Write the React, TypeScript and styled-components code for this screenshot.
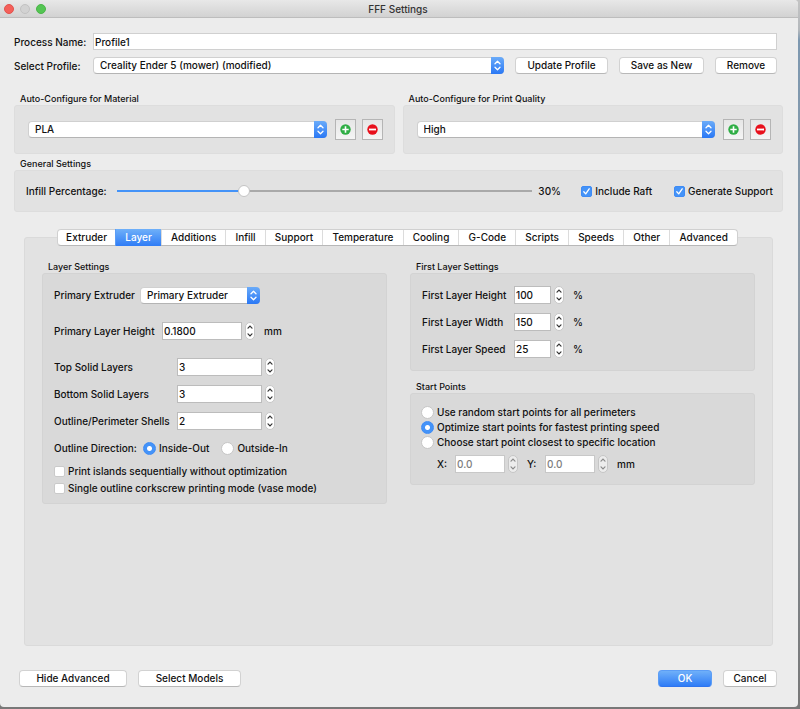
import React, { useId, useState } from "react";
import styled, { createGlobalStyle, css } from "styled-components";

const GlobalStyle = createGlobalStyle`
  *, *::before, *::after { box-sizing: border-box; }
  html, body { margin: 0; }
  body {
    background: linear-gradient(180deg, #c4c4c4 0, #b4b8bc 30px, #7d98b0 40px, #8d9aa6 300px, #787878 100%);
    color: #111;
    font-family: Inter, "Liberation Sans", sans-serif;
    font-size: 10px;
    font-weight: 500;
    line-height: 16px;
  }
  button, input, select { font: inherit; color: inherit; margin: 0; }
`;

const Backdrop = styled.div`
  display: flex;
  min-height: 100vh;
  padding: 0 2px 2px 0;
`;

const Window = styled.main`
  flex: 1;
  min-width: 0;
  display: flex;
  flex-direction: column;
  background: #ececec;
  border-radius: 0 4px 4px 4px;
  overflow: hidden;
`;

const TitleBar = styled.header`
  display: grid;
  grid-template-columns: 1fr auto 1fr;
  align-items: center;
  height: 18px;
  padding: 0 6px 0 4px;
  background: linear-gradient(#e8e8e8, #d2d2d2);
  border-bottom: 1px solid #bdbdbd;
`;

const Lights = styled.div`
  display: flex;
  gap: 6px;
`;

const Light = styled.button<{ $color: string; $edge: string }>`
  width: 10px;
  height: 10px;
  padding: 0;
  border: 1px solid ${(p) => p.$edge};
  border-radius: 50%;
  background: ${(p) => p.$color};
`;

const WindowTitle = styled.h1`
  margin: 0;
  font-size: 10px;
  font-weight: 500;
  color: #333;
`;

const Content = styled.div`
  flex: 1;
  display: flex;
  flex-direction: column;
  padding: 15px 15px 0 14px;
`;

const ProfileForm = styled.div`
  display: grid;
  grid-template-columns: 72px 1fr;
  align-items: center;
  gap: 7px;
  padding-right: 6px;
  white-space: nowrap;
`;

const ProfileRow = styled.div`
  display: flex;
  gap: 11px;
`;

const TextInput = styled.input`
  width: 100%;
  min-width: 0;
  height: 17px;
  padding: 0 1px;
  border: 1px solid #d0d0d0;
  border-radius: 0;
  background: #fff;
  outline: none;
`;

const PushButton = styled.button<{ $width: number; $primary?: boolean }>`
  flex: none;
  width: ${(p) => p.$width}px;
  height: 17px;
  padding: 0;
  border: 1px solid #d2d2d2;
  border-bottom-color: #b8b8b8;
  border-radius: 4px;
  background: #fff;
  line-height: 15px;
  ${(p) =>
    p.$primary &&
    css`
      border-color: #5b9df6;
      border-bottom-color: #2f74ee;
      background: linear-gradient(#6fb0f9, #2f7cf6);
      color: #fff;
    `}
`;

const SelectFrame = styled.span<{ $width?: number }>`
  display: flex;
  ${(p) => (p.$width ? `flex: none; width: ${p.$width}px;` : "flex: 1; min-width: 0;")}
  height: 17px;
  border: 1px solid #d0d0d0;
  border-bottom-color: #b4b4b4;
  border-radius: 4px;
  background: #fff;
`;

const NativeSelect = styled.select`
  flex: 1;
  min-width: 0;
  margin-right: -13px;
  padding: 0 16px 0 6px;
  border: 0;
  appearance: none;
  background: transparent;
  outline: none;
  line-height: 15px;
`;

const SelectCap = styled.svg`
  flex: none;
  width: 13px;
  height: 17px;
  margin: -1px -1px -1px 0;
  border-radius: 0 4px 4px 0;
  background: linear-gradient(#6aabf9, #2a78f5);
  pointer-events: none;
`;

const GroupSection = styled.section`
  min-width: 0;
`;

const GroupTitle = styled.h2`
  margin: 0;
  padding-left: 6px;
  font-size: 9px;
  font-weight: 500;
  line-height: 12px;
`;

const GroupBox = styled.div<{ $deep?: boolean; $pad: string }>`
  display: flex;
  flex-direction: column;
  padding: ${(p) => p.$pad};
  border: 1px solid ${(p) => (p.$deep ? "#d3d3d3" : "#dddddd")};
  border-radius: 3px;
  background: ${(p) => (p.$deep ? "#d9d9d9" : "#e2e2e2")};
`;

const AutoGrid = styled.div`
  display: grid;
  grid-template-columns: 1fr 1fr;
  gap: 8px;
  margin-top: 19px;
`;

const AutoRow = styled.div`
  display: flex;
  align-items: center;
  gap: 6px;
`;

const AutoSelect = styled.div`
  flex: 1;
  min-width: 0;
  display: flex;
  margin-right: 2px;
`;

const ToolButton = styled.button`
  flex: none;
  display: grid;
  place-items: center;
  width: 21px;
  height: 21px;
  padding: 0;
  border: 1px solid #b5b5b5;
  background: linear-gradient(#e6e6e6, #f5f5f5);
`;

const GeneralGroup = styled.div`
  margin-top: 4px;
`;

const GeneralRow = styled.div`
  display: flex;
  align-items: center;
`;

const SliderLabel = styled.label`
  flex: none;
  width: 91px;
`;

const Slider = styled.input<{ $percent: number }>`
  flex: 1;
  min-width: 0;
  height: 14px;
  appearance: none;
  background: linear-gradient(
      90deg,
      #4493f8 ${(p) => p.$percent}%,
      #a9a9a9 ${(p) => p.$percent}%
    )
    center / 100% 2px no-repeat;
  outline: none;
  &::-webkit-slider-thumb {
    appearance: none;
    width: 12px;
    height: 12px;
    border: 1px solid #c4c4c4;
    border-radius: 50%;
    background: #fff;
  }
`;

const SliderValue = styled.output`
  flex: none;
  width: 43px;
  margin-left: 6px;
`;

const ChoiceLabel = styled.label`
  display: flex;
  align-items: center;
  gap: 3px;
  white-space: nowrap;
`;

const GeneralChoices = styled.div`
  display: flex;
  gap: 22px;
`;

const CheckInput = styled.input`
  flex: none;
  appearance: none;
  width: 11px;
  height: 11px;
  border: 1px solid #cacaca;
  border-radius: 2px;
  background: #fff;
  &:checked {
    border-color: #3e8bf5;
    background: #4493f8
      url("data:image/svg+xml,%3Csvg xmlns='http://www.w3.org/2000/svg' viewBox='0 0 9 9'%3E%3Cpath d='M1.8 4.8 3.7 6.9 7.2 1.8' fill='none' stroke='white' stroke-width='1.3' stroke-linecap='round' stroke-linejoin='round'/%3E%3C/svg%3E")
      center / 9px 9px no-repeat;
  }
`;

const RadioInput = styled.input`
  flex: none;
  appearance: none;
  width: 13px;
  height: 13px;
  border: 1px solid #c6c6c6;
  border-radius: 50%;
  background: #fff;
  &:checked {
    border-color: #3e8bf5;
    background: radial-gradient(circle, #fff 2px, #4493f8 3px);
  }
`;

const TabArea = styled.div`
  flex: 1;
  display: flex;
  flex-direction: column;
  margin-top: 17px;
  padding: 0 10px;
`;

const TabList = styled.div`
  z-index: 1;
  display: flex;
  height: 17px;
  margin: 0 35px -9px 33px;
  border: 1px solid #d0d0d0;
  border-bottom-color: #b8b8b8;
  border-radius: 4px;
  background: #fff;
`;

const Tab = styled.button<{ $active: boolean }>`
  flex: 1 1 auto;
  padding: 0 8px;
  border: 0;
  border-left: 1px solid #dcdcdc;
  background: transparent;
  line-height: 15px;
  white-space: nowrap;
  &:first-child {
    border-left: 0;
    padding: 0 7px;
  }
  ${(p) =>
    p.$active &&
    css`
      margin: -1px 0;
      border-left-color: #5b9df6;
      background: linear-gradient(#6fb0f9, #2f7cf6);
      color: #fff;
    `}
`;

const TabPanel = styled.div`
  flex: 1;
  display: grid;
  grid-template-columns: 1fr 1fr;
  align-items: start;
  gap: 23px;
  padding: 23px 17px;
  border: 1px solid #dadada;
  border-radius: 3px;
  background: #e2e2e2;
`;

const PanelColumn = styled.div`
  display: flex;
  flex-direction: column;
  gap: 10px;
  min-width: 0;
`;

const Rows = styled.div<{ $gap: number }>`
  display: flex;
  flex-direction: column;
  gap: ${(p) => p.$gap}px;
`;

const Row = styled.div<{ $indent?: number }>`
  display: flex;
  align-items: center;
  height: 18px;
  padding-left: ${(p) => p.$indent ?? 0}px;
`;

const FieldLabel = styled.label<{ $width: number }>`
  flex: none;
  width: ${(p) => p.$width}px;
  white-space: nowrap;
`;

const DirectionLabel = styled.span`
  flex: none;
  width: 89px;
  white-space: nowrap;
`;

const ChoiceGroup = styled.div`
  display: flex;
  gap: 12px;
`;

const ChoiceList = styled.div<{ $line: number }>`
  display: flex;
  flex-direction: column;
  line-height: ${(p) => p.$line}px;
`;

const NumberInput = styled.input<{ $width: number }>`
  width: ${(p) => p.$width}px;
  height: 18px;
  padding: 0 1px;
  border: 1px solid #bcbcbc;
  border-radius: 0;
  background: #fff;
  outline: none;
  &:disabled {
    border-color: #c8c8c8;
    color: #7d7d7d;
  }
`;

const StepperFrame = styled.span<{ $disabled?: boolean }>`
  flex: none;
  display: flex;
  flex-direction: column;
  width: 10px;
  height: 18px;
  margin-left: 3px;
  border: 1px solid #c6c6c6;
  border-radius: 5px;
  background: ${(p) => (p.$disabled ? "#ececec" : "#fff")};
  color: ${(p) => (p.$disabled ? "#8a8a8a" : "#333")};
`;

const StepButton = styled.button`
  flex: 1;
  display: grid;
  place-items: center;
  min-height: 0;
  padding: 0;
  border: 0;
  background: transparent;
`;

const Unit = styled.span`
  margin-left: 9px;
`;

const Coordinate = styled.div`
  display: flex;
  align-items: center;
  margin-right: 9px;
`;

const Footer = styled.footer`
  display: flex;
  gap: 11px;
  padding: 24px 6px 20px 5px;
`;

const Spacer = styled.div`
  flex: 1;
`;

function Select({ id, label, options, width }: { id?: string; label?: string; options: string[]; width?: number }) {
  return (
    <SelectFrame $width={width}>
      <NativeSelect id={id} aria-label={label}>
        {options.map((o) => (
          <option key={o}>{o}</option>
        ))}
      </NativeSelect>
      <SelectCap viewBox="0 0 13 17" aria-hidden="true">
        <path
          d="M4 6.8 6.5 4.2 9 6.8M4 10.2 6.5 12.8 9 10.2"
          fill="none"
          stroke="#fff"
          strokeWidth="1.3"
          strokeLinecap="round"
          strokeLinejoin="round"
        />
      </SelectCap>
    </SelectFrame>
  );
}

function Group({ title, pad, deep, children }: { title: string; pad: string; deep?: boolean; children: React.ReactNode }) {
  const id = useId();
  return (
    <GroupSection aria-labelledby={id}>
      <GroupTitle id={id}>{title}</GroupTitle>
      <GroupBox $pad={pad} $deep={deep}>
        {children}
      </GroupBox>
    </GroupSection>
  );
}

function AddRemove() {
  return (
    <>
      <ToolButton type="button" aria-label="Add">
        <svg width="11" height="11" viewBox="0 0 11 11" aria-hidden="true">
          <circle cx="5.5" cy="5.5" r="5.2" fill="#2fae45" />
          <path d="M5.5 2.3v6.4M2.3 5.5h6.4" stroke="#fff" strokeWidth="1.6" />
        </svg>
      </ToolButton>
      <ToolButton type="button" aria-label="Delete">
        <svg width="11" height="11" viewBox="0 0 11 11" aria-hidden="true">
          <circle cx="5.5" cy="5.5" r="5.2" fill="#e8101c" />
          <path d="M2 5.5h7" stroke="#fff" strokeWidth="1.8" />
        </svg>
      </ToolButton>
    </>
  );
}

function AutoConfigure({ title, value }: { title: string; value: string }) {
  return (
    <Group title={title} pad="13px 11px 13px 13px">
      <AutoRow>
        <AutoSelect>
          <Select label={title} options={[value]} />
        </AutoSelect>
        <AddRemove />
      </AutoRow>
    </Group>
  );
}

type SpinProps = {
  label: string;
  labelWidth: number;
  width: number;
  initial: string;
  step?: number;
  disabled?: boolean;
};

function Spin({ label, labelWidth, width, initial, step = 1, disabled }: SpinProps) {
  const id = useId();
  const [value, setValue] = useState(initial);
  const digits = (initial.split(".")[1] ?? "").length;
  const bump = (by: number) => setValue((v) => (Number(v) + by).toFixed(digits));
  return (
    <>
      <FieldLabel htmlFor={id} $width={labelWidth}>
        {label}
      </FieldLabel>
      <NumberInput id={id} $width={width} value={value} disabled={disabled} onChange={(e) => setValue(e.target.value)} />
      <StepperFrame $disabled={disabled}>
        <StepButton type="button" aria-label={`Increase ${label}`} disabled={disabled} onClick={() => bump(step)}>
          <svg width="6" height="4" viewBox="0 0 6 4" aria-hidden="true">
            <path d="M1 3.2 3 1.2 5 3.2" fill="none" stroke="currentColor" strokeWidth="1.2" strokeLinecap="round" />
          </svg>
        </StepButton>
        <StepButton type="button" aria-label={`Decrease ${label}`} disabled={disabled} onClick={() => bump(-step)}>
          <svg width="6" height="4" viewBox="0 0 6 4" aria-hidden="true">
            <path d="M1 .8 3 2.8 5 .8" fill="none" stroke="currentColor" strokeWidth="1.2" strokeLinecap="round" />
          </svg>
        </StepButton>
      </StepperFrame>
    </>
  );
}

function Check({ label, checked }: { label: string; checked?: boolean }) {
  return (
    <ChoiceLabel>
      <CheckInput type="checkbox" defaultChecked={checked} />
      {label}
    </ChoiceLabel>
  );
}

function Radio({ name, label, checked }: { name: string; label: string; checked?: boolean }) {
  return (
    <ChoiceLabel>
      <RadioInput type="radio" name={name} defaultChecked={checked} />
      {label}
    </ChoiceLabel>
  );
}

const TABS = [
  "Extruder",
  "Layer",
  "Additions",
  "Infill",
  "Support",
  "Temperature",
  "Cooling",
  "G-Code",
  "Scripts",
  "Speeds",
  "Other",
  "Advanced",
];

function LayerSettings() {
  return (
    <Group title="Layer Settings" deep pad="12px 11px 6px 11px">
      <Rows $gap={18}>
        <Row>
          <FieldLabel htmlFor="primary-extruder" $width={86}>
            Primary Extruder
          </FieldLabel>
          <Select id="primary-extruder" options={["Primary Extruder"]} width={120} />
        </Row>
        <Row>
          <Spin label="Primary Layer Height" labelWidth={108} width={80} initial="0.1800" step={0.01} />
          <Unit>mm</Unit>
        </Row>
        <Rows $gap={9}>
          <Row>
            <Spin label="Top Solid Layers" labelWidth={123} width={85} initial="3" />
          </Row>
          <Row>
            <Spin label="Bottom Solid Layers" labelWidth={123} width={85} initial="3" />
          </Row>
          <Row>
            <Spin label="Outline/Perimeter Shells" labelWidth={123} width={85} initial="2" />
          </Row>
          <Rows $gap={6}>
            <Row role="radiogroup" aria-labelledby="outline-direction">
              <DirectionLabel id="outline-direction">Outline Direction:</DirectionLabel>
              <ChoiceGroup>
                <Radio name="direction" label="Inside-Out" checked />
                <Radio name="direction" label="Outside-In" />
              </ChoiceGroup>
            </Row>
            <ChoiceList $line={17}>
              <Check label="Print islands sequentially without optimization" />
              <Check label="Single outline corkscrew printing mode (vase mode)" />
            </ChoiceList>
          </Rows>
        </Rows>
      </Rows>
    </Group>
  );
}

function FirstLayerSettings() {
  const fields = [
    ["First Layer Height", "100"],
    ["First Layer Width", "150"],
    ["First Layer Speed", "25"],
  ];
  return (
    <Group title="First Layer Settings" deep pad="12px 11px">
      <Rows $gap={9}>
        {fields.map(([label, value]) => (
          <Row key={label}>
            <Spin label={label} labelWidth={92} width={37} initial={value} />
            <Unit>%</Unit>
          </Row>
        ))}
      </Rows>
    </Group>
  );
}

function StartPoints() {
  return (
    <Group title="Start Points" deep pad="11px 10px">
      <Rows $gap={5}>
        <ChoiceList $line={15} role="radiogroup" aria-label="Start Points">
          <Radio name="start" label="Use random start points for all perimeters" />
          <Radio name="start" label="Optimize start points for fastest printing speed" checked />
          <Radio name="start" label="Choose start point closest to specific location" />
        </ChoiceList>
        <Row $indent={16}>
          <Coordinate>
            <Spin label="X:" labelWidth={18} width={50} initial="0.0" disabled />
          </Coordinate>
          <Coordinate>
            <Spin label="Y:" labelWidth={18} width={50} initial="0.0" disabled />
          </Coordinate>
          <span>mm</span>
        </Row>
      </Rows>
    </Group>
  );
}

export default function App() {
  const [name, setName] = useState("Profile1");
  const [infill, setInfill] = useState(30);
  const [tab, setTab] = useState("Layer");
  return (
    <>
      <GlobalStyle />
      <Backdrop>
        <Window>
          <TitleBar>
            <Lights>
              <Light type="button" aria-label="Close" $color="#f4605a" $edge="#e2524c" />
              <Light type="button" aria-label="Minimize" $color="#d2d2d2" $edge="#c2c2c2" />
              <Light type="button" aria-label="Zoom" $color="#54c553" $edge="#4ab548" />
            </Lights>
            <WindowTitle>FFF Settings</WindowTitle>
          </TitleBar>
          <Content>
            <ProfileForm>
              <label htmlFor="process-name">Process Name:</label>
              <TextInput id="process-name" value={name} onChange={(e) => setName(e.target.value)} />
              <label htmlFor="profile">Select Profile:</label>
              <ProfileRow>
                <Select id="profile" options={["Creality Ender 5 (mower) (modified)"]} />
                <PushButton type="button" $width={93}>Update Profile</PushButton>
                <PushButton type="button" $width={85}>Save as New</PushButton>
                <PushButton type="button" $width={62}>Remove</PushButton>
              </ProfileRow>
            </ProfileForm>
            <AutoGrid>
              <AutoConfigure title="Auto-Configure for Material" value="PLA" />
              <AutoConfigure title="Auto-Configure for Print Quality" value="High" />
            </AutoGrid>
            <GeneralGroup>
              <Group title="General Settings" pad="12px 9px 12px 11px">
                <GeneralRow>
                  <SliderLabel htmlFor="infill">Infill Percentage:</SliderLabel>
                  <Slider
                    id="infill"
                    type="range"
                    min={0}
                    max={100}
                    value={infill}
                    $percent={infill}
                    onChange={(e) => setInfill(Number(e.target.value))}
                  />
                  <SliderValue htmlFor="infill">{infill}%</SliderValue>
                  <GeneralChoices>
                    <Check label="Include Raft" checked />
                    <Check label="Generate Support" checked />
                  </GeneralChoices>
                </GeneralRow>
              </Group>
            </GeneralGroup>
            <TabArea>
              <TabList role="tablist" aria-label="Setting categories">
                {TABS.map((t) => (
                  <Tab
                    key={t}
                    type="button"
                    role="tab"
                    aria-selected={t === tab}
                    $active={t === tab}
                    onClick={() => setTab(t)}
                  >
                    {t}
                  </Tab>
                ))}
              </TabList>
              <TabPanel role="tabpanel" aria-label={tab}>
                {tab === "Layer" && (
                  <>
                    <PanelColumn>
                      <LayerSettings />
                    </PanelColumn>
                    <PanelColumn>
                      <FirstLayerSettings />
                      <StartPoints />
                    </PanelColumn>
                  </>
                )}
              </TabPanel>
            </TabArea>
            <Footer>
              <PushButton type="button" $width={108}>Hide Advanced</PushButton>
              <PushButton type="button" $width={103}>Select Models</PushButton>
              <Spacer />
              <PushButton type="button" $width={54} $primary>OK</PushButton>
              <PushButton type="button" $width={54}>Cancel</PushButton>
            </Footer>
          </Content>
        </Window>
      </Backdrop>
    </>
  );
}
